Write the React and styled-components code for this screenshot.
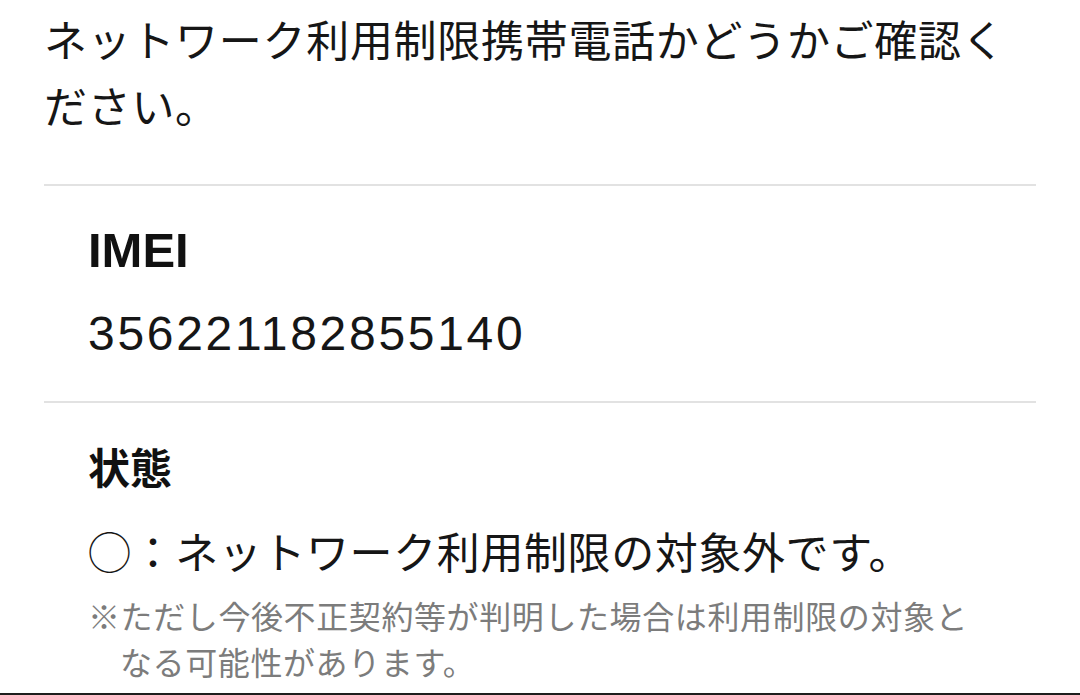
import React from 'react'
import styled, { createGlobalStyle } from 'styled-components'

const GlobalStyle = createGlobalStyle`
  html, body {
    margin: 0;
    padding: 0;
    background: #ffffff;
  }
  body {
    font-family: "Liberation Sans", "Noto Sans CJK JP", sans-serif;
    color: #161616;
  }
`

const Page = styled.div`
  height: 695px;
  box-sizing: border-box;
  padding: 5px 44px 0 44px;
  border-bottom: 2px solid #1e1e1e;
  overflow: hidden;
`

const Intro = styled.p`
  margin: 0 0 47px 0;
  font-family: "Noto Sans CJK JP", sans-serif;
  font-size: 43px;
  letter-spacing: 0.7px;
  line-height: 66px;
  color: #161616;
`

const Section = styled.section`
  border-top: 2px solid #e2e2e2;
  padding: ${props => props.$top}px 44px 0 44px;
  margin: 0 0 ${props => props.$bottom}px 0;
`

const Label = styled.h2`
  margin: 0;
  font-family: "Liberation Sans", "Noto Sans CJK JP", sans-serif;
  font-weight: 700;
  font-size: ${props => props.$size}px;
  line-height: 60px;
  color: #111;
`

const Value = styled.div`
  margin-top: 24px;
  font-family: "Liberation Sans", sans-serif;
  font-size: 48px;
  letter-spacing: 2.7px;
  line-height: 60px;
  color: #161616;
`

const Status = styled.div`
  margin-top: 20px;
  font-family: "Noto Sans CJK JP", sans-serif;
  font-size: 43px;
  letter-spacing: 0.6px;
  line-height: 60px;
  color: #161616;
  white-space: nowrap;
`

const Note = styled.p`
  margin: 12px 0 0 0;
  font-family: "Noto Sans CJK JP", sans-serif;
  font-size: 32px;
  letter-spacing: 0.6px;
  line-height: 46px;
  color: #7c7c7c;
  padding-left: 1em;
  text-indent: -1em;
`

export default function App() {
  return (
    <>
      <GlobalStyle />
      <Page>
        <Intro>ネットワーク利用制限携帯電話かどうかご確認ください。</Intro>

        <Section $top={34} $bottom={37}>
          <Label $size={49}>IMEI</Label>
          <Value>356221182855140</Value>
        </Section>

        <Section $top={37} $bottom={0}>
          <Label $size={42}>状態</Label>
          <Status>◯：ネットワーク利用制限の対象外です。</Status>
          <Note>※ただし今後不正契約等が判明した場合は利用制限の対象となる可能性があります。</Note>
        </Section>
      </Page>
    </>
  )
}
